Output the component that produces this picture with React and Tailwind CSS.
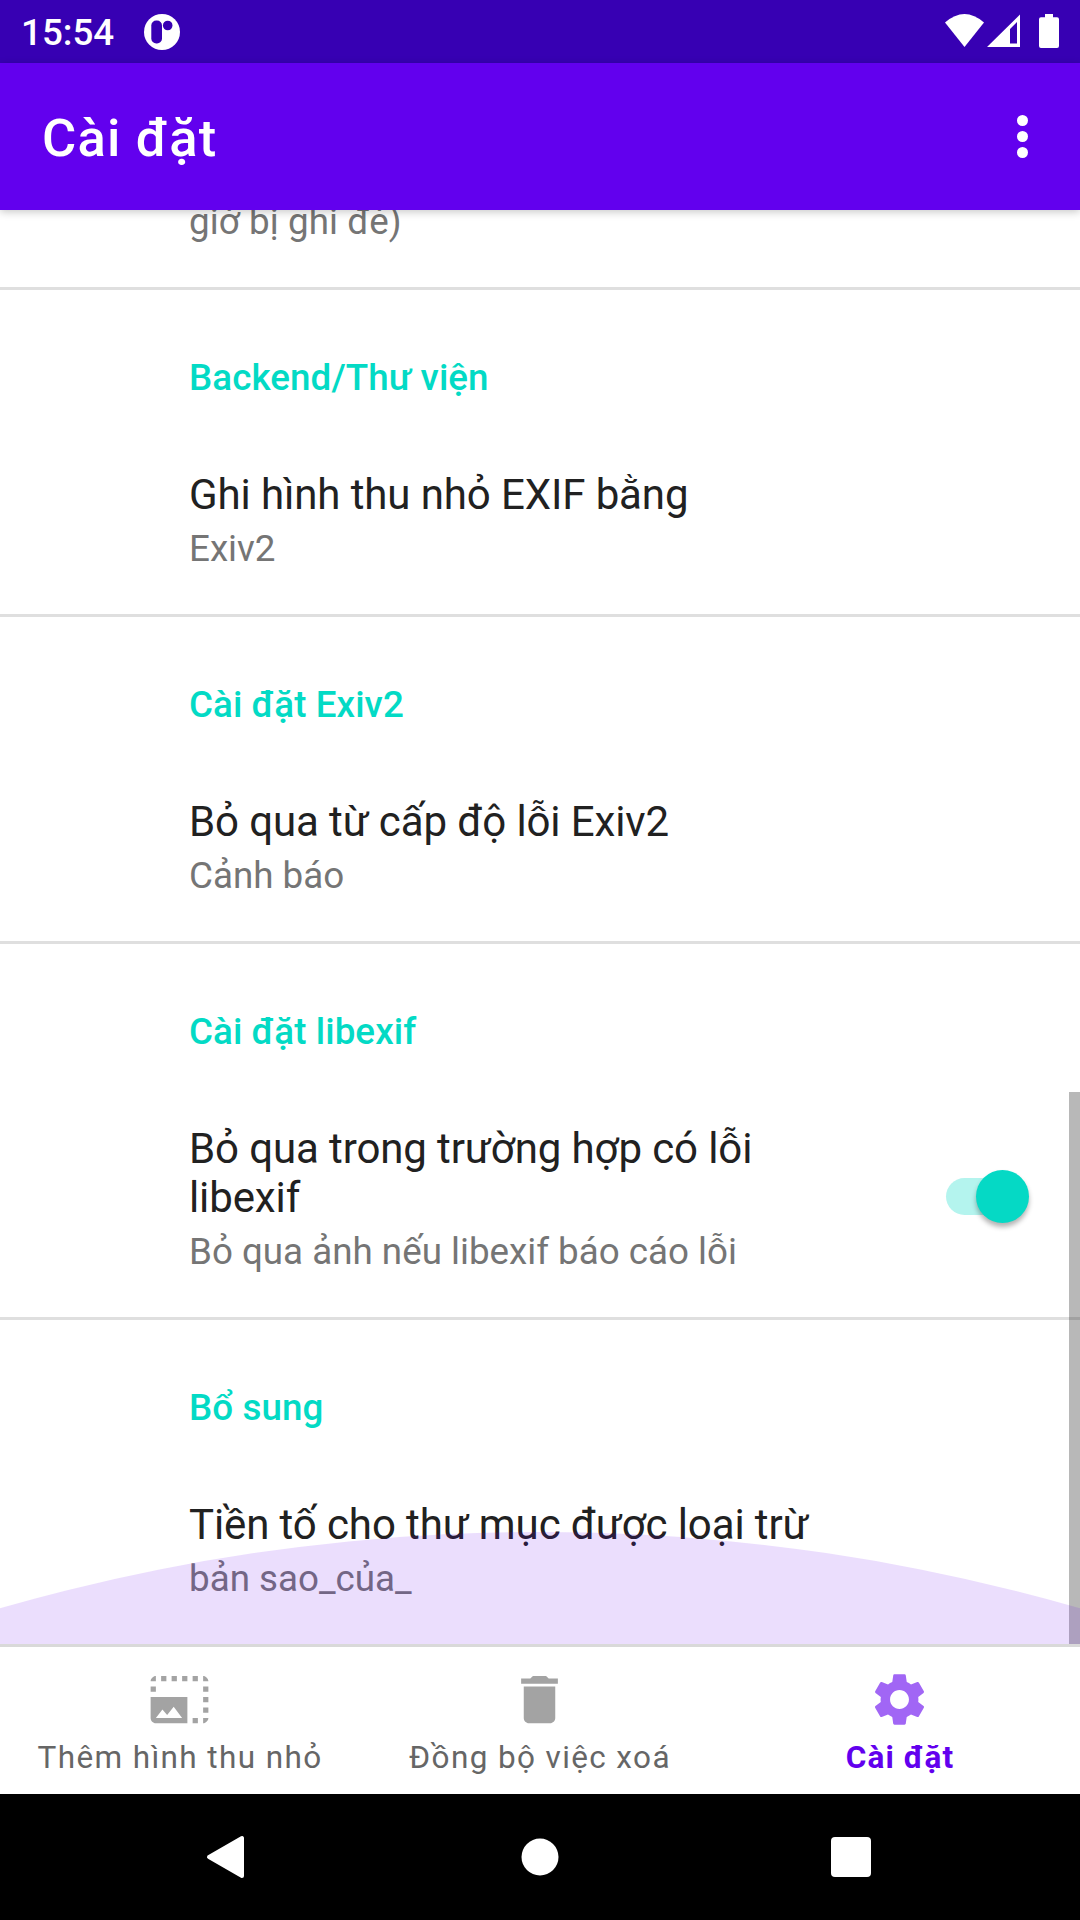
import { MdPhotoSizeSelectLarge, MdDelete, MdSettings } from "react-icons/md";

function StatusBar() {
  return (
    <div className="flex h-[63px] items-center bg-[#3700b3] text-white">
      <span className="ml-[21px] w-[123px] pt-[2px] text-[36.75px] leading-[43px] font-medium">15:54</span>
      <svg className="h-[36px] w-[36px]" viewBox="0 0 36 36">
        <circle cx="18" cy="18" r="18" fill="#fff" />
        <rect x="7.3" y="6.5" width="10.7" height="23" rx="5" fill="#3700b3" />
        <circle cx="23.7" cy="11.5" r="4.8" fill="#3700b3" />
      </svg>
      <svg className="ml-auto h-[63px] w-[135px]" viewBox="945 0 135 63" fill="#fff">
        <path d="M945 22.5 Q964.5 5.5 984 22.5 L964.5 47 Z" />
        <path fillRule="evenodd" d="M1020 14.5 V47 H987 Z M1017 22 L1010 29 V43.5 H1017 Z" />
        <path d="M1045 14 h8 v3.3 h4 q2 0 2 2 v26.7 q0 2 -2 2 h-16 q-2 0 -2 -2 v-26.7 q0 -2 2 -2 h4 Z" />
      </svg>
    </div>
  );
}

function AppBar() {
  return (
    <header className="relative z-10 flex h-[147px] items-center justify-between bg-[#6200ee] pl-[42px] text-white shadow-[0_2px_8px_rgba(0,0,0,0.22)]">
      <h1 className="pt-[2px] text-[52.5px] leading-[62px] font-medium tracking-[1.2px]">Cài đặt</h1>
      <div className="mr-[52px] flex flex-col gap-[5px]">
        <span className="size-[11px] rounded-full bg-white" />
        <span className="size-[11px] rounded-full bg-white" />
        <span className="size-[11px] rounded-full bg-white" />
      </div>
    </header>
  );
}

function Toggle() {
  return (
    <div className="mr-[51px] mb-[4px] flex h-[53px] w-[83px] items-center rounded-full">
      <div className="h-[37px] w-[60px] rounded-full bg-[#b4f4ee]" />
      <div className="-ml-[30px] size-[53px] shrink-0 rounded-full bg-[#05d9c5] shadow-[0_4px_5px_rgba(0,0,0,0.3)]" />
    </div>
  );
}

function Section({ heading, title, summary, toggle }) {
  return (
    <section className="shrink-0 border-t-[3px] border-[#dfdfdf] pt-[66px] pl-[189px]">
      <h2 className="text-[36.75px] leading-[43px] font-medium tracking-[0.08px] text-[#03dac5]">{heading}</h2>
      <div className="mt-[71px] flex items-center justify-between pb-[44px]">
        <div>
          <p className="text-[42px] leading-[49px] tracking-[-0.11px] whitespace-pre-line text-[#212121]">{title}</p>
          <p className="mt-[8px] text-[36.75px] leading-[43px] text-[#757575]">{summary}</p>
        </div>
        {toggle && <Toggle />}
      </div>
    </section>
  );
}

const sections = [
  { heading: "Backend/Thư viện", title: "Ghi hình thu nhỏ EXIF bằng", summary: "Exiv2" },
  { heading: "Cài đặt Exiv2", title: "Bỏ qua từ cấp độ lỗi Exiv2", summary: "Cảnh báo" },
  {
    heading: "Cài đặt libexif",
    title: "Bỏ qua trong trường hợp có lỗi\nlibexif",
    summary: "Bỏ qua ảnh nếu libexif báo cáo lỗi",
    toggle: true,
  },
  { heading: "Bổ sung", title: "Tiền tố cho thư mục được loại trừ", summary: "bản sao_của_" },
];

function NavItem({ icon: Icon, label, active }) {
  return (
    <div className="flex flex-1 flex-col items-center pt-[21px]">
      <Icon className={active ? "mr-[2px] size-[63px] text-[#a166f5]" : "mr-[2px] size-[63px] text-[#a3a3a3]"} />
      <span
        className={
          active
            ? "mt-[8px] text-[31.5px] leading-[37px] font-bold tracking-[1.05px] text-[#6200ee]"
            : "mt-[8px] text-[31.5px] leading-[37px] tracking-[1.38px] text-[#666666]"
        }
      >
        {label}
      </span>
    </div>
  );
}

export default function App() {
  return (
    <div className="flex h-[1920px] w-[1080px] flex-col overflow-hidden bg-white font-['Roboto',sans-serif]">
      <StatusBar />
      <AppBar />
      <main className="relative flex h-[1434px] flex-col justify-end overflow-hidden">
        <p className="shrink-0 pb-[44px] pl-[189px] text-[36.75px] leading-[43px] tracking-[0.08px] text-[#757575]">giờ bị ghi đè)</p>
        {sections.map((s) => (
          <Section key={s.heading} {...s} />
        ))}
        <div className="absolute top-[882px] right-0 h-[552px] w-[11px] bg-black/28" />
        <div className="absolute top-[1322px] left-1/2 size-[3900px] -translate-x-1/2 rounded-full bg-[#6200ee]/13" />
      </main>
      <nav className="flex h-[150px] border-t-[3px] border-[#d9d9d9] bg-white">
        <NavItem icon={MdPhotoSizeSelectLarge} label="Thêm hình thu nhỏ" />
        <NavItem icon={MdDelete} label="Đồng bộ việc xoá" />
        <NavItem icon={MdSettings} label="Cài đặt" active />
      </nav>
      <footer className="flex h-[126px] items-center bg-black">
        <svg className="h-[126px] w-[1080px]" viewBox="0 1794 1080 126" fill="#fff" stroke="#fff" strokeLinejoin="round">
          <path d="M209 1857 L242 1838 V1876 Z" strokeWidth="4" />
          <circle cx="540" cy="1857" r="18.5" stroke="none" />
          <rect x="831" y="1837" width="40" height="40" rx="4" stroke="none" />
        </svg>
      </footer>
    </div>
  );
}
